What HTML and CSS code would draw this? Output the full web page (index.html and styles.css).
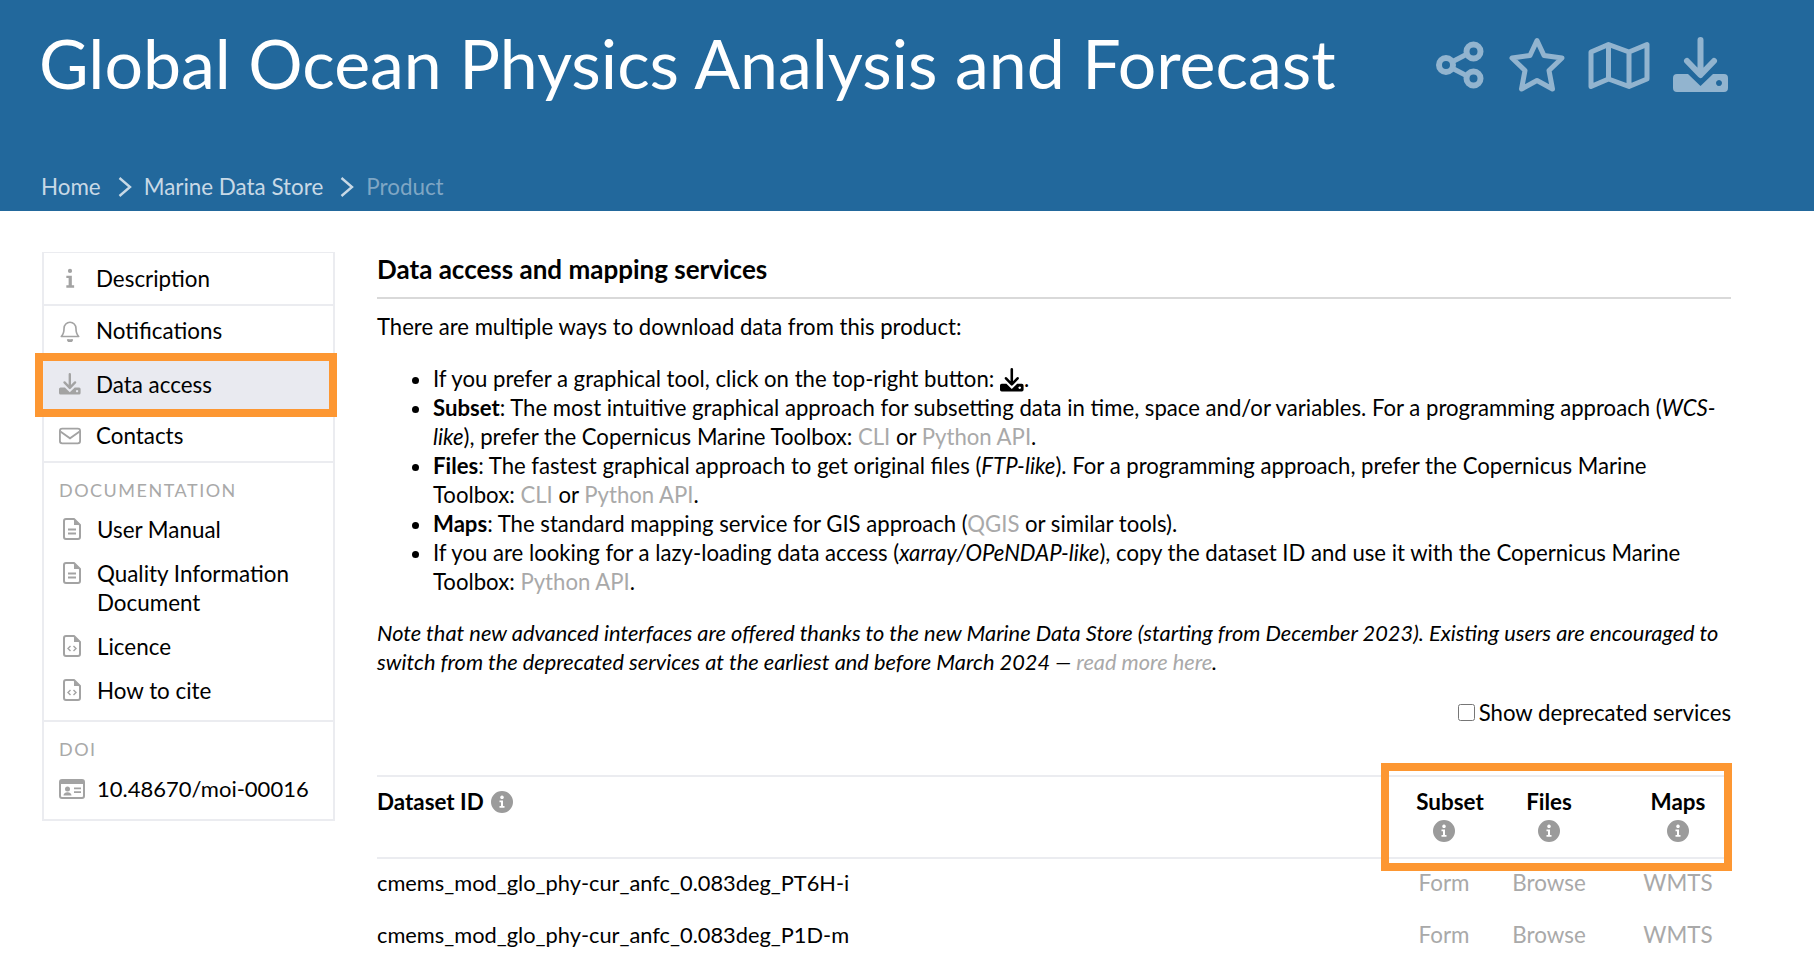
FILE: index.html
```html
<!DOCTYPE html>
<html lang="en">
<head>
    <meta charset="UTF-8">
    <meta name="viewport" content="width=device-width, initial-scale=1.0">
    <title>Global Ocean Physics Analysis and Forecast</title>
    <link rel="stylesheet" href="styles.css">
</head>
<body>
    <svg class="sprite" width="0" height="0">
        <symbol id="i-download" viewBox="0 0 56 56">
            <path d="M27.5 3V36M14 24L27.5 38L41 24" fill="none" stroke="currentColor" stroke-width="6" stroke-linecap="round" stroke-linejoin="round"/>
            <path fill="currentColor" fill-rule="evenodd" d="M4 37H15L27.5 49L40 37H51a4 4 0 0 1 4 4V51a4 4 0 0 1-4 4H4a4 4 0 0 1-4-4V41a4 4 0 0 1 4-4ZM46 43a3 3 0 1 0 .01 0Z"/>
        </symbol>
        <symbol id="i-file" viewBox="0 0 18 22">
            <path d="M3 1H11L17 7V19a2 2 0 0 1-2 2H3a2 2 0 0 1-2-2V3a2 2 0 0 1 2-2Z" fill="none" stroke="currentColor" stroke-width="2" stroke-linejoin="round"/>
            <path d="M11 1V7H17" fill="currentColor"/>
            <path d="M5 11.500H13M5 15.500H13" stroke="currentColor" stroke-width="2"/>
        </symbol>
        <symbol id="i-code" viewBox="0 0 18 22">
            <path d="M3 1H11L17 7V19a2 2 0 0 1-2 2H3a2 2 0 0 1-2-2V3a2 2 0 0 1 2-2Z" fill="none" stroke="currentColor" stroke-width="2" stroke-linejoin="round"/>
            <path d="M11 1V7H17" fill="currentColor"/>
            <path d="M7.500 11L5 13.500L7.500 16M10.500 11L13 13.500L10.500 16" fill="none" stroke="currentColor" stroke-width="1.400"/>
        </symbol>
        <symbol id="i-info" viewBox="0 0 22 22">
            <path fill="currentColor" fill-rule="evenodd" d="M11 0a11 11 0 1 1 0 22a11 11 0 0 1 0-22ZM11 4.500a1.800 1.800 0 1 0 .01 0ZM8.500 9.500V11.300H10V15H8.500V16.800H13.500V15H12V9.500Z"/>
        </symbol>
    </svg>

    <header class="top">
        <div class="top-row">
            <h1>Global Ocean Physics Analysis and Forecast</h1>
            <div class="top-icons">
                <svg class="ic-share" viewBox="0 0 50 48" fill="none" stroke="currentColor">
                    <path d="M10 24L37 10M10 24L37 38" stroke-width="5"/>
                    <circle cx="10" cy="24" r="7" stroke-width="6" fill="#22689c"/>
                    <circle cx="37.500" cy="10.500" r="7" stroke-width="6" fill="#22689c"/>
                    <circle cx="37.500" cy="37.500" r="7" stroke-width="6" fill="#22689c"/>
                </svg>
                <svg class="ic-star" viewBox="0 0 56 56" fill="none" stroke="currentColor" stroke-width="5" stroke-linejoin="round">
                    <path d="M28 3.500L35 18.500L53 21L40 33.500L43.500 52L28 43.500L12.500 52L16 33.500L3 21L21 18.500Z"/>
                </svg>
                <svg class="ic-map" viewBox="0 0 62 49" fill="none" stroke="currentColor" stroke-width="5" stroke-linejoin="round">
                    <path d="M3 11L20.500 3.500L41 11L59 3.500V38L41 45.500L20.500 38L3 45.500ZM20.500 3.500V38M41 11V45.500"/>
                </svg>
                <svg class="ic-dl"><use href="#i-download"/></svg>
            </div>
        </div>
        <nav class="crumbs">
            <a href="#">Home</a>
            <svg class="chev" viewBox="0 0 14 20"><path d="M1.500 1L12 10L1.500 19" fill="none" stroke="currentColor" stroke-width="2.400"/></svg>
            <a href="#">Marine Data Store</a>
            <svg class="chev" viewBox="0 0 14 20"><path d="M1.500 1L12 10L1.500 19" fill="none" stroke="currentColor" stroke-width="2.400"/></svg>
            <span class="crumb-current">Product</span>
        </nav>
    </header>

    <div class="page">
        <aside class="side">
            <a class="side-item" href="#">
                <svg class="side-ic" viewBox="0 0 24 24"><path fill="currentColor" d="M12 2a2.300 2.300 0 1 1 0 4.600a2.300 2.300 0 0 1 0-4.600ZM8 9.500H14V20H16.500V22.500H8V20H10.500V12H8Z"/></svg>
                Description
            </a>
            <a class="side-item" href="#">
                <svg class="side-ic" viewBox="0 0 24 24" fill="none" stroke="currentColor" stroke-width="1.800"><path d="M12 2.500a6.500 6.500 0 0 0-6.500 6.500c0 5-1 7-3 9H21.500c-2-2-3-4-3-9A6.500 6.500 0 0 0 12 2.500Z" stroke-linejoin="round"/><path d="M9.500 21a2.500 2.500 0 0 0 5 0" fill="currentColor"/></svg>
                Notifications
            </a>
            <a class="side-item is-active" href="#">
                <svg class="side-ic"><use href="#i-download"/></svg>
                Data access
            </a>
            <a class="side-item" href="#">
                <svg class="side-ic" viewBox="0 0 24 24" fill="none" stroke="currentColor" stroke-width="2"><rect x="1" y="4" width="22" height="16" rx="2.500"/><path d="M1.500 7L12 14.500L22.500 7"/></svg>
                Contacts
            </a>
            <div class="side-group">
                <h3>Documentation</h3>
                <a class="doc-link" href="#"><svg class="doc-ic"><use href="#i-file"/></svg><span>User Manual</span></a>
                <a class="doc-link" href="#"><svg class="doc-ic"><use href="#i-file"/></svg><span>Quality Information Document</span></a>
                <a class="doc-link" href="#"><svg class="doc-ic"><use href="#i-code"/></svg><span>Licence</span></a>
                <a class="doc-link" href="#"><svg class="doc-ic"><use href="#i-code"/></svg><span>How to cite</span></a>
            </div>
            <div class="side-group side-doi">
                <h3>DOI</h3>
                <a class="doi-link" href="#">
                    <svg class="doi-ic" viewBox="0 0 26 20"><path fill="currentColor" fill-rule="evenodd" d="M3 0H23a3 3 0 0 1 3 3V17a3 3 0 0 1-3 3H3a3 3 0 0 1-3-3V3a3 3 0 0 1 3-3ZM2 5V17a1 1 0 0 0 1 1H23a1 1 0 0 0 1-1V5ZM8.500 7.500a2.500 2.500 0 1 1 0 5a2.500 2.500 0 0 1 0-5ZM4.500 16.500c0-2 1.500-3.300 4-3.300s4 1.300 4 3.300ZM15 8.500H22V10.200H15ZM15 12.300H22V14H15Z"/></svg>
                    10.48670/moi-00016
                </a>
            </div>
        </aside>

        <main class="content">
            <h2>Data access and mapping services</h2>
            <p class="intro">There are multiple ways to download data from this product:</p>
            <ul class="ways">
                <li>If you prefer a graphical tool, click on the top-right button: <svg class="inline-dl"><use href="#i-download"/></svg>.</li>
                <li><b>Subset</b>: The most intuitive graphical approach for subsetting data in time, space and/or variables. For a programming approach (<i>WCS-like</i>), prefer the Copernicus Marine Toolbox: <a href="#">CLI</a> or <a href="#">Python API</a>.</li>
                <li><b>Files</b>: The fastest graphical approach to get original files (<i>FTP-like</i>). For a programming approach, prefer the Copernicus Marine Toolbox: <a href="#">CLI</a> or <a href="#">Python API</a>.</li>
                <li><b>Maps</b>: The standard mapping service for GIS approach (<a href="#">QGIS</a> or similar tools).</li>
                <li>If you are looking for a lazy-loading data access (<i>xarray/OPeNDAP-like</i>), copy the dataset ID and use it with the Copernicus Marine Toolbox: <a href="#">Python API</a>.</li>
            </ul>
            <p class="note"><i>Note that new advanced interfaces are offered thanks to the new Marine Data Store (starting from December 2023). Existing users are encouraged to switch from the deprecated services at the earliest and before March 2024 — <a href="#">read more here</a>.</i></p>
            <label class="deprecated"><input type="checkbox">Show deprecated services</label>

            <div class="datasets">
                <div class="ds-head">
                    <div class="ds-title">Dataset ID <svg class="info"><use href="#i-info"/></svg></div>
                    <div class="ds-services">
                        <div class="ds-col"><b class="shift">Subset</b><svg class="info"><use href="#i-info"/></svg></div>
                        <div class="ds-col"><b>Files</b><svg class="info"><use href="#i-info"/></svg></div>
                        <div class="ds-col"><b>Maps</b><svg class="info"><use href="#i-info"/></svg></div>
                    </div>
                </div>
                <div class="ds-row">
                    <span>cmems_mod_glo_phy-cur_anfc_0.083deg_PT6H-i</span>
                    <div class="ds-services"><a href="#">Form</a><a href="#">Browse</a><a href="#">WMTS</a></div>
                </div>
                <div class="ds-row">
                    <span>cmems_mod_glo_phy-cur_anfc_0.083deg_P1D-m</span>
                    <div class="ds-services"><a href="#">Form</a><a href="#">Browse</a><a href="#">WMTS</a></div>
                </div>
            </div>
        </main>
    </div>
</body>
</html>
```

FILE: styles.css
```css
html, body {
    height: 100%;
    overflow: hidden;
}
body {
    margin: 0;
    font-family: Lato, "Open Sans", sans-serif;
    font-size: 22px;
    line-height: 29px;
    color: #000;
    background: #fff;
}
a {
    color: #a9a9a9;
    text-decoration: none;
}
.sprite {
    position: absolute;
}

/* header */
.top {
    height: 211px;
    box-sizing: border-box;
    padding: 0 85px 0 40px;
    background: #22689c;
}
.top-row {
    display: flex;
    justify-content: space-between;
    align-items: center;
    height: 130px;
}
.top-row h1 {
    margin: -4px 0 0 -1px;
    font-size: 68px;
    font-weight: 400;
    line-height: 80px;
    color: #fff;
}
.top-icons {
    display: flex;
    align-items: center;
    gap: 23px;
    color: #92b4cf;
}
.ic-share {
    width: 50px;
    height: 48px;
}
.ic-star, .ic-dl {
    width: 56px;
    height: 56px;
}
.ic-map {
    width: 62px;
    height: 49px;
}
.crumbs {
    display: flex;
    align-items: center;
    margin-top: 42px;
    padding-left: 1px;
    font-size: 22.4px;
    color: #c8d9e6;
}
.crumbs a {
    color: #c8d9e6;
}
.chev {
    width: 14px;
    height: 20px;
    margin: 0 12px 0 17px;
}
.crumb-current {
    color: #7fa6c4;
}

/* layout */
.page {
    display: flex;
    align-items: flex-start;
    gap: 42px;
    padding: 41px 83px 0 42px;
}

/* sidebar */
.side {
    flex: 0 0 293px;
    box-sizing: border-box;
    border: 2px solid #ebecf0;
    border-width: 1px 2px 2px 2px;
    font-size: 22.4px;
}
.side-item {
    position: relative;
    display: flex;
    align-items: center;
    height: 52.500px;
    box-sizing: border-box;
    padding-left: 15px;
    color: #000;
    border-bottom: 2px solid #ebecf0;
}
.side-item.is-active {
    background: #e9eaf0;
    border-bottom: 0;
}
.side-item.is-active::after {
    content: "";
    position: absolute;
    inset: -5px -4px -6px -9px;
    border: 8px solid #fd9732;
}
.side-ic {
    flex: none;
    width: 22px;
    height: 22px;
    margin-right: 15px;
    color: #a3a3a3;
}
.side-group {
    padding: 14px 15px 15px 15px;
    border-bottom: 2px solid #ebecf0;
}
.side-doi {
    border-bottom: 0;
    padding-bottom: 16px;
}
.side-group h3 {
    margin: 0 0 12px;
    font-size: 18px;
    font-weight: 400;
    line-height: 26px;
    letter-spacing: 1.500px;
    text-transform: uppercase;
    color: #a9a9a9;
}
.doc-link {
    display: flex;
    align-items: flex-start;
    margin-bottom: 15px;
    color: #000;
}
.doc-link:last-child {
    margin-bottom: 0;
}
.doc-ic {
    flex: none;
    width: 18px;
    height: 22px;
    margin: 3px 16px 0 4px;
    color: #a3a3a3;
}
.doi-link {
    display: flex;
    align-items: center;
    font-size: 22px;
    color: #000;
}
.doi-ic {
    flex: none;
    width: 26px;
    height: 20px;
    margin-right: 12px;
    color: #a3a3a3;
}

/* main column */
.content {
    flex: 1;
    min-width: 0;
}
.content h2 {
    margin: 0;
    padding-top: 1px;
    height: 44px;
    font-size: 26px;
    font-weight: 700;
    line-height: 32px;
    border-bottom: 2px solid #d9d9d9;
}
.intro {
    margin: 13px 0 0;
    font-size: 22.1px;
}
.ways {
    margin: 23px 0 0;
    padding-left: 56px;
    font-size: 22.15px;
}
.inline-dl {
    width: 24px;
    height: 24px;
    vertical-align: -5px;
}
.note {
    margin: 22px 0 0;
    font-size: 21.8px;
}
.deprecated {
    display: flex;
    justify-content: flex-end;
    align-items: center;
    margin-top: 22px;
    font-size: 22.2px;
}
.deprecated input {
    width: 17px;
    height: 17px;
    margin: 0 4px 0 0;
}

/* dataset table */
.datasets {
    margin-top: 48px;
    border-top: 2px solid #ebecf0;
    font-size: 22.4px;
}
.ds-head, .ds-row {
    display: flex;
    justify-content: space-between;
}
.ds-head {
    height: 80px;
    border-bottom: 2px solid #ebecf0;
}
.ds-title {
    padding-top: 10px;
    font-weight: 700;
}
.ds-title .info {
    margin-left: 2px;
}
.info {
    width: 22px;
    height: 22px;
    color: #9b9b9b;
    vertical-align: -3px;
}
.ds-services {
    position: relative;
    display: grid;
    grid-template-columns: 58px 152px 106px;
    justify-items: center;
    text-align: center;
}
.ds-head .ds-services::after {
    content: "";
    position: absolute;
    inset: -14px -1px -14px -34px;
    border: 8px solid #fd9732;
}
.ds-col {
    display: flex;
    flex-direction: column;
    align-items: center;
    gap: 4px;
    padding-top: 10px;
    width: 100%;
}
.ds-col b {
    white-space: nowrap;
}
.ds-col .shift {
    margin-left: 12px;
}
.ds-row {
    height: 52px;
    box-sizing: border-box;
    padding-top: 9px;
}
.ds-row > span {
    font-size: 21.8px;
}
.ds-row .ds-services {
    width: 316px;
}
```
